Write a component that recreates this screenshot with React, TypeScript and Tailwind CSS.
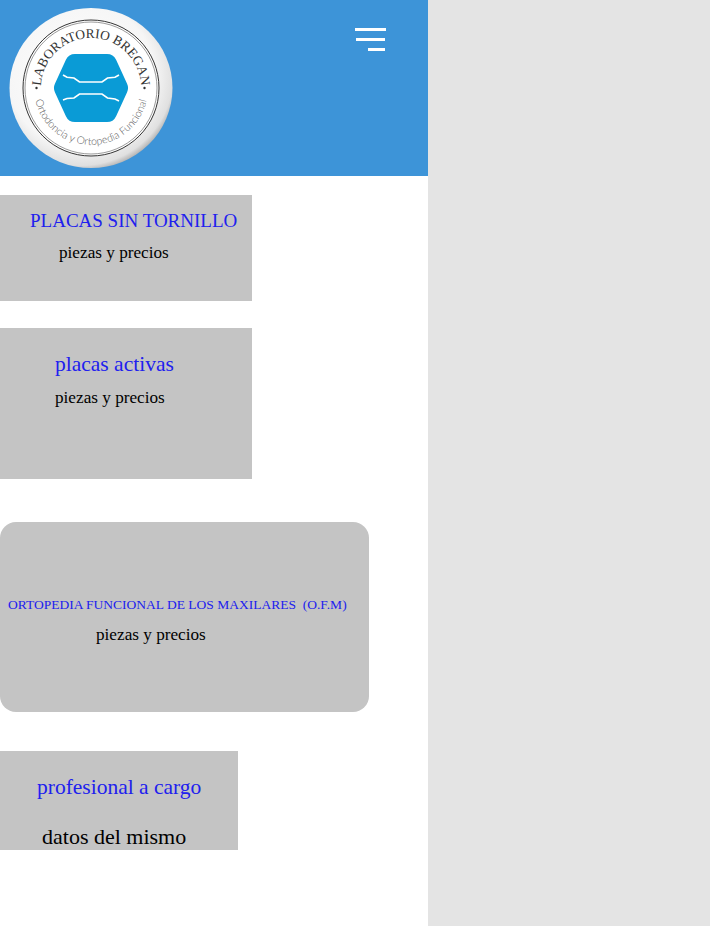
import React from "react";

const serif = "font-['Liberation_Serif',serif]";

function Logo() {
  return (
    <svg width="164" height="162" viewBox="0 0 164 162" className="block ml-[9px] mt-[7px]">
      <defs>
        <radialGradient id="disc" cx="44%" cy="42%" r="60%">
          <stop offset="0%" stopColor="#ffffff" />
          <stop offset="75%" stopColor="#f6f6f6" />
          <stop offset="94%" stopColor="#e0e0e0" />
          <stop offset="100%" stopColor="#b4b4b4" />
        </radialGradient>
        <path id="topArc" d="M 35 98 A 50 50 0 1 1 129 98" />
        <path id="bottomArc" d="M 25 81 A 57 57 0 0 0 139 81" />
      </defs>
      <ellipse cx="82" cy="81" rx="81.5" ry="80" fill="url(#disc)" />
      <circle cx="82" cy="81" r="68" fill="#ffffff" stroke="#333333" strokeWidth="1" />
      <circle cx="82" cy="81" r="66" fill="none" stroke="#555555" strokeWidth="0.6" />
      <text fontFamily="Liberation Serif, serif" fontSize="13.4" fill="#333333">
        <textPath href="#topArc" startOffset="50%" textAnchor="middle">LABORATORIO BREGAN</textPath>
      </text>
      <text fontFamily="Lato, sans-serif" fontWeight="300" fontSize="10.5" fill="#555555">
        <textPath href="#bottomArc" startOffset="50%" textAnchor="middle">Ortodoncia y Ortopedia Funcional</textPath>
      </text>
      <circle cx="27.5" cy="81" r="1.2" fill="#333333" />
      <circle cx="135.5" cy="81" r="1.2" fill="#333333" />
      <polygon
        points="66,57 98,57 109,81 98,105 66,105 55,81"
        fill="#0a9bd6"
        stroke="#0a9bd6"
        strokeWidth="20"
        strokeLinejoin="round"
      />
      <path
        d="M54 68 L58 70.3 L65 71 L70.5 75 L93 75 L98.5 71 L106 70.3 L110 68"
        fill="none"
        stroke="#ffffff"
        strokeWidth="1.6"
      />
      <path
        d="M54 93 L58 91.5 L65 91 L70.5 87 L93 87 L98.5 91 L106 92 L110 94"
        fill="none"
        stroke="#ffffff"
        strokeWidth="1.6"
      />
    </svg>
  );
}

function MenuIcon() {
  return (
    <svg width="32" height="24" viewBox="0 0 32 24" className="block">
      <rect x="0" y="0" width="31" height="3" fill="#ffffff" />
      <rect x="1" y="10" width="29" height="3" fill="#ffffff" />
      <rect x="13" y="20" width="17" height="3" fill="#ffffff" />
    </svg>
  );
}

export default function App() {
  return (
    <div className={`flex h-[926px] w-[710px] overflow-hidden bg-white ${serif}`}>
      <div className="w-[428px]">
        {/* header */}
        <div className="flex h-[176px] items-start justify-between bg-[#3d94d8]">
          <Logo />
          <div className="mr-[41px] mt-[28px]">
            <MenuIcon />
          </div>
        </div>

        {/* placas sin tornillo */}
        <div className="mt-[19px] h-[106px] w-[252px] bg-[#c4c4c4] pt-[13px]">
          <p className="whitespace-nowrap pl-[30px] text-[19px] leading-[26px] text-[#2020ee]">PLACAS SIN TORNILLO</p>
          <p className="mt-[9px] pl-[59px] text-[17.2px] leading-[20px] text-black">piezas y precios</p>
        </div>

        {/* placas activas */}
        <div className="mt-[27px] h-[151px] w-[252px] bg-[#c4c4c4] pt-[23px]">
          <p className="pl-[55px] text-[21.5px] leading-[26px] text-[#2020ee]">placas activas</p>
          <p className="mt-[11px] pl-[55px] text-[17.2px] leading-[20px] text-black">piezas y precios</p>
        </div>

        {/* ortopedia */}
        <div className="mt-[43px] h-[190px] w-[369px] rounded-2xl bg-[#c4c4c4] pt-[73px]">
          <p className="whitespace-pre pl-[8px] text-[13.5px] leading-[20px] text-[#2020ee]">ORTOPEDIA FUNCIONAL DE LOS MAXILARES  (O.F.M)</p>
          <p className="mt-[10px] pl-[96px] text-[17.2px] leading-[20px] text-black">piezas y precios</p>
        </div>

        {/* profesional */}
        <div className="mt-[39px] h-[99px] w-[238px] bg-[#c4c4c4] pt-[23px]">
          <p className="pl-[37px] text-[21.5px] leading-[26px] text-[#2020ee]">profesional a cargo</p>
          <p className="mt-[25px] pl-[42px] text-[22px] leading-[24px] text-black">datos del mismo</p>
        </div>
      </div>
      <div className="flex-1 bg-[#e4e4e4]" />
    </div>
  );
}
